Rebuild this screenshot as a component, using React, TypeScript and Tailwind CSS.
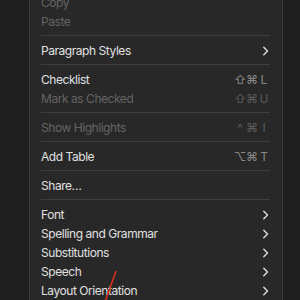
import React from "react";

type Item =
  | { kind: "sep" }
  | { kind: "item"; label: string; disabled?: boolean; sub?: boolean; keys?: string[] };

const items: Item[] = [
  { kind: "item", label: "Copy", disabled: true },
  { kind: "item", label: "Paste", disabled: true },
  { kind: "sep" },
  { kind: "item", label: "Paragraph Styles", sub: true },
  { kind: "sep" },
  { kind: "item", label: "Checklist", keys: ["⇧", "⌘", "L"] },
  { kind: "item", label: "Mark as Checked", disabled: true, keys: ["⇧", "⌘", "U"] },
  { kind: "sep" },
  { kind: "item", label: "Show Highlights", disabled: true, keys: ["^", "⌘", "I"] },
  { kind: "sep" },
  { kind: "item", label: "Add Table", keys: ["⌥", "⌘", "T"] },
  { kind: "sep" },
  { kind: "item", label: "Share…" },
  { kind: "sep" },
  { kind: "item", label: "Font", sub: true },
  { kind: "item", label: "Spelling and Grammar", sub: true },
  { kind: "item", label: "Substitutions", sub: true },
  { kind: "item", label: "Speech", sub: true },
  { kind: "item", label: "Layout Orientation", sub: true },
  { kind: "item", label: "Services", sub: true },
];

function Chevron() {
  return (
    <svg width="7" height="10" viewBox="0 0 7 10" className="mr-[1px]">
      <path d="M1.8 1.2 L5.5 5 L1.8 8.8" fill="none" stroke="#d8d8d8" strokeWidth="1.5" strokeLinecap="round" strokeLinejoin="round" />
    </svg>
  );
}

export default function App() {
  return (
    <div
      className="relative w-[300px] h-[300px] overflow-hidden bg-[#1e1e1e]"
      style={{ fontFamily: "Inter, 'DejaVu Sans', sans-serif" }}
    >
      <div className="ml-[29px] mt-[-7px] w-[254px] border-x border-[#3c3c3c] bg-[#282828] pl-[11px] pr-[12px] pb-[20px]">
        {items.map((it, i) =>
          it.kind === "sep" ? (
            <div key={i} className="h-[10px] pt-[4px]">
              <div className="h-px bg-[#3e3e3e]" />
            </div>
          ) : (
            <div key={i} className="flex h-[19px] items-center justify-between text-[12px] tracking-[-0.45px] leading-none">
              <span className={it.disabled ? "text-[#646464]" : "text-[#e0e0e0]"}>{it.label}</span>
              {it.sub && <Chevron />}
              {it.keys && (
                <span className={`flex text-[12px] tracking-normal ${it.disabled ? "text-[#5c5c5c]" : "text-[#8a8a8a]"}`}>
                  {it.keys.map((k, j) => (
                    <span key={j} className="w-[12px] text-center">
                      {k}
                    </span>
                  ))}
                </span>
              )}
            </div>
          )
        )}
      </div>
      <svg className="absolute left-0 top-0" width="300" height="300">
        <line x1="116" y1="271" x2="105" y2="302" stroke="#d8301f" strokeWidth="1.6" />
      </svg>
    </div>
  );
}
